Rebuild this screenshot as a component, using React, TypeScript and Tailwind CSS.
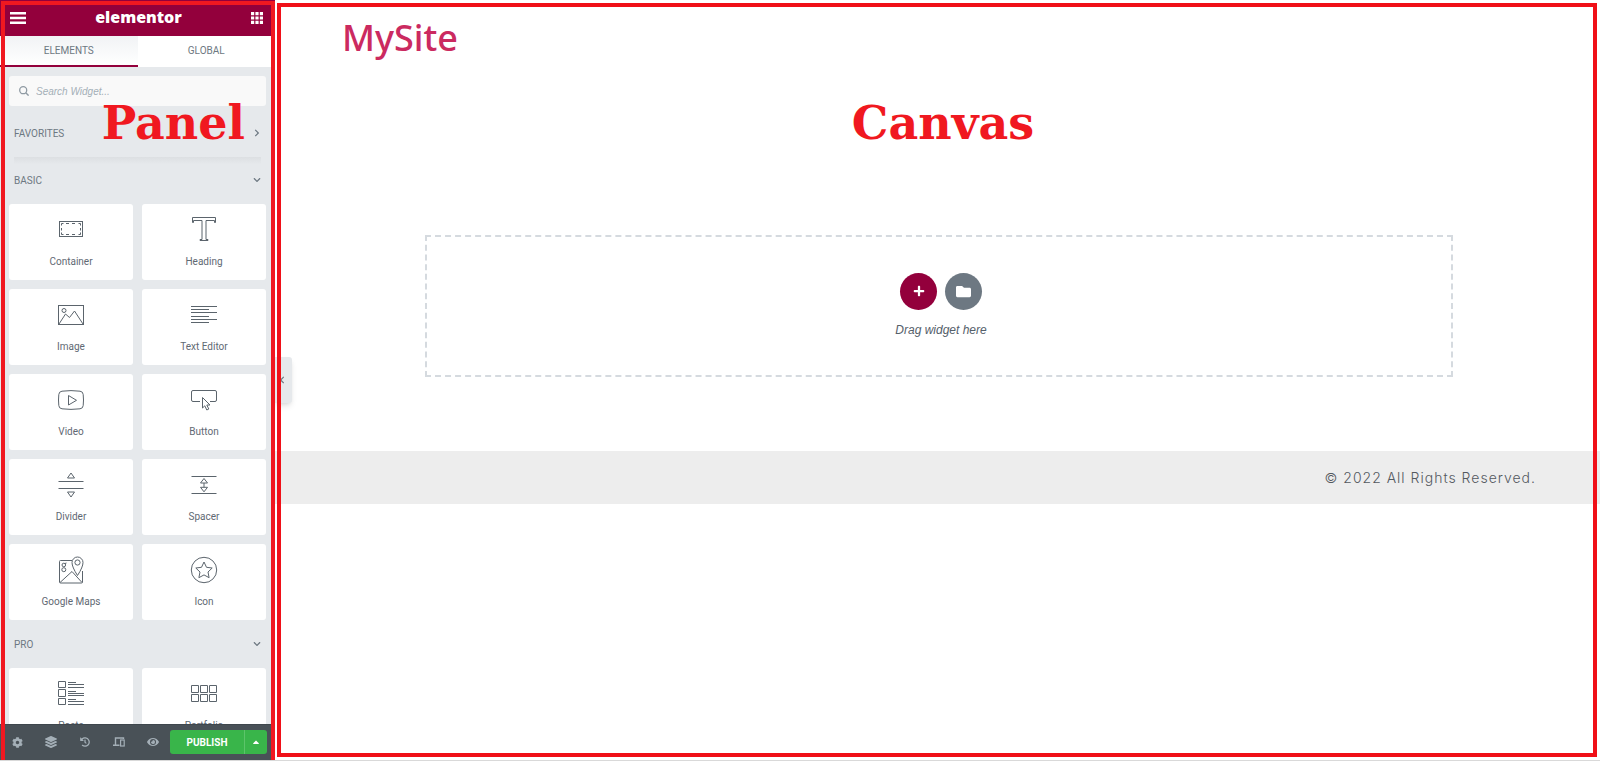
import type { ReactNode } from "react"
import {
  FaCaretUp,
  FaChevronDown,
  FaChevronLeft,
  FaChevronRight,
  FaCog,
  FaEye,
  FaFolder,
  FaHistory,
  FaLayerGroup,
  FaPlus
} from "react-icons/fa"

interface Widget {
  name: string
  icon: ReactNode
}

const BASIC_WIDGETS: Widget[] = [
  {
    name: "Container",
    icon: (
      <>
        <rect x="2.5" y="5.5" width="23" height="15" />
        <path d="M4.500 9.500v-2h2M9 7.500h3M15 7.500h3M21.500 7.500h2v2M23.500 12v2.500M23.500 16.500v2h-2M18 18.500h-3M12 18.500h-3M6.500 18.500h-2v-2M4.500 14.500V12" />
      </>
    )
  },
  {
    name: "Heading",
    icon: (
      <path d="M2.500 1.500h23v5h-1v-2H16v19h2v1h-8v-1h2v-19H3.500v2h-1z" />
    )
  },
  {
    name: "Image",
    icon: (
      <>
        <rect x="1.500" y="4.500" width="25" height="19" />
        <circle cx="7" cy="9.500" r="2" />
        <path d="M2 23l6.500-10 4 3.500 5-6.500L26 23" />
      </>
    )
  },
  {
    name: "Text Editor",
    icon: (
      <path d="M1 5.500h26M1 8.500h18M1 11.500h26M1 15.500h18M1 18.500h26M1 21.500h18" />
    )
  },
  {
    name: "Video",
    icon: (
      <>
        <path d="M5 5.200Q14 4 23 5.200q3 .3 3.200 3.300.6 5.500 0 11-.2 3-3.200 3.300-9 1.200-18 0-3-.3-3.200-3.300-.6-5.500 0-11Q2 5.500 5 5.200z" />
        <path d="M11.500 9.500v9.500l8-4.700z" />
      </>
    )
  },
  {
    name: "Button",
    icon: (
      <>
        <path d="M10 15.500H3q-1.500 0-1.500-1.500V6Q1.500 4.500 3 4.500h22q1.500 0 1.500 1.500v8q0 1.500-1.500 1.500h-5" />
        <path d="M12.500 11.500v10.500l2.300-2.200 2 4.200 2-1-2-4h3.200z" />
      </>
    )
  },
  {
    name: "Divider",
    icon: (
      <path d="M1.500 10.500h25M1.500 17.500h25M14 2l3.500 5h-7zM14 26l3.500-5h-7z" />
    )
  },
  {
    name: "Spacer",
    icon: (
      <path d="M1.500 5.500h25M1.500 22.500h25M14 7.500l3.500 4.500h-7zM14 20.800l3.500-4.500h-7zM14 12v4.300" />
    )
  },
  {
    name: "Google Maps",
    icon: (
      <>
        <path d="M15 4.500H3.500q-1 0-1 1v20.500q0 1 1 1h21q1 0 1-1V15M3 26.500l12-11M15 15.500l10 11" />
        <path d="M20.500 19.500Q15 11 15 6.500a5.500 5.500 0 0 1 11 0q0 4.500-5.500 13z" />
        <circle cx="20.500" cy="6.500" r="2.600" />
        <circle cx="6.800" cy="9" r="1.800" />
        <circle cx="6.800" cy="13.700" r="2" />
        <path d="M8 7.500l1.500-.5" />
      </>
    )
  },
  {
    name: "Icon",
    icon: (
      <>
        <circle cx="14" cy="14" r="12.700" />
        <path d="M14 6l2.500 5.300 5.700.7-4.200 4 1.100 5.700-5.100-2.800-5.100 2.800L10 16l-4.200-4 5.700-.7z" />
      </>
    )
  }
]

const PRO_WIDGETS: Widget[] = [
  {
    name: "Posts",
    icon: (
      <path d="M1.500 1.500h7v6h-7zM1.500 9.500h7v7h-7zM1.500 18.500h7v6h-7zM11 2.500h8M11 4.500h16M11 7.500h16M11 11.500h8M11 13.500h16M11 15.500h16M11 19.500h8M11 21.500h16M11 24.500h16" />
    )
  },
  {
    name: "Portfolio",
    icon: (
      <path d="M1.500 5.500h7v7h-7zM10.500 5.500h7v7h-7zM19.500 5.500h7v7h-7zM1.500 14.500h7v7h-7zM10.500 14.500h7v7h-7zM19.500 14.500h7v7h-7z" />
    )
  }
]

function WidgetGrid({ widgets }: { widgets: Widget[] }) {
  return (
    <div className="grid grid-cols-2 gap-[9px]">
      {widgets.map((widget) => (
        <button
          key={widget.name}
          type="button"
          className="flex h-[76px] flex-col items-center gap-[10px] rounded-[3px] bg-white pt-3">
          <svg
            viewBox="0 0 28 28"
            className="size-7 shrink-0 fill-none stroke-[#5b646c]"
            aria-hidden="true">
            {widget.icon}
          </svg>
          <span className="text-[10px] leading-4 text-[#5f6973]">
            {widget.name}
          </span>
        </button>
      ))}
    </div>
  )
}

function DevicesIcon() {
  return (
    <svg
      viewBox="0 0 12 10"
      className="h-[10px] w-3 fill-none stroke-current"
      aria-hidden="true">
      <path d="M10.500 2V1h-8v6.500M0 8.300h6.500" strokeWidth="1.400" />
      <rect x="7.600" y="3" width="3.600" height="6" strokeWidth="1.200" />
    </svg>
  )
}

const TOOLS = [
  { label: "Settings", icon: <FaCog className="size-[11px]" /> },
  { label: "Navigator", icon: <FaLayerGroup className="size-3" /> },
  { label: "History", icon: <FaHistory className="size-[10px]" /> },
  { label: "Responsive Mode", icon: <DevicesIcon /> },
  { label: "Preview Changes", icon: <FaEye className="size-3" /> }
]

function Panel() {
  return (
    <aside className="relative flex w-[275px] shrink-0 flex-col bg-[#e6e9ec] font-['Roboto',sans-serif]">
      <header className="flex h-9 shrink-0 items-center justify-between bg-[#93003c] pr-3 pl-[10px] text-white">
        <button type="button" aria-label="Menu">
          <svg viewBox="0 0 16 12" className="h-3 w-4 fill-current">
            <path d="M0 0h16v2.500H0zM0 4.750h16v2.500H0zM0 9.500h16V12H0z" />
          </svg>
        </button>
        <span className="pb-[2px] font-['Open_Sans',sans-serif] text-[16px] leading-5 font-extrabold">
          elementor
        </span>
        <button type="button" aria-label="Widgets Panel">
          <svg viewBox="0 0 12 12" className="size-3 fill-current">
            <path d="M0 0h3.200v3.200H0zM4.400 0h3.200v3.200H4.400zM8.800 0H12v3.200H8.800zM0 4.400h3.200v3.200H0zM4.400 4.400h3.200v3.200H4.400zM8.800 4.400H12v3.200H8.800zM0 8.800h3.200V12H0zM4.400 8.800h3.200V12H4.400zM8.800 8.800H12V12H8.800z" />
          </svg>
        </button>
      </header>

      <nav className="grid h-[31px] shrink-0 grid-cols-2 text-[10px] text-[#6d7882]">
        <button
          type="button"
          className="border-b-2 border-[#93003c] bg-linear-to-b from-[#f1f3f5] to-white">
          ELEMENTS
        </button>
        <button type="button" className="border-b-2 border-white bg-white">
          GLOBAL
        </button>
      </nav>

      <div className="min-h-0 flex-1 overflow-hidden px-[9px] pt-[9px]">
        <label className="flex h-[30px] items-center gap-[7px] rounded-[3px] bg-[#f9f9f9] px-[10px] text-[#a4afb7]">
          <svg
            viewBox="0 0 10 10"
            className="size-[10px] fill-none stroke-[#8f9aa3]"
            aria-hidden="true">
            <circle cx="4.200" cy="4.200" r="3.500" strokeWidth="1.300" />
            <path d="M6.800 6.800l2.800 2.800" strokeWidth="1.400" />
          </svg>
          <input
            type="text"
            aria-label="Search Widget"
            placeholder="Search Widget..."
            className="min-w-0 flex-1 bg-transparent font-['Liberation_Sans',sans-serif] text-[10px] italic outline-none placeholder:text-[#a4afb7]"
          />
        </label>

        <button
          type="button"
          className="mt-[3px] flex h-12 w-full items-center justify-between px-[5px] text-[10px] text-[#6d7882]">
          FAVORITES
          <FaChevronRight className="size-2" />
        </button>
        <div className="mx-[5px] h-[7px] bg-linear-to-b from-[#dcdfe2] to-[#e6e9ec]" />
        <button
          type="button"
          className="mb-2 flex h-8 w-full items-center justify-between px-[5px] text-[10px] text-[#6d7882]">
          BASIC
          <FaChevronDown className="size-2" />
        </button>
        <WidgetGrid widgets={BASIC_WIDGETS} />
        <button
          type="button"
          className="flex h-12 w-full items-center justify-between px-[5px] text-[10px] text-[#6d7882]">
          PRO
          <FaChevronDown className="size-2" />
        </button>
        <WidgetGrid widgets={PRO_WIDGETS} />
      </div>

      <footer className="flex h-9 shrink-0 items-center border-t border-[#3f474d] bg-[#495157] pb-px text-[#a4afb7]">
        {TOOLS.map((tool) => (
          <button
            key={tool.label}
            type="button"
            aria-label={tool.label}
            className="flex h-full w-[34px] items-center justify-center">
            {tool.icon}
          </button>
        ))}
        <div className="flex h-6 w-[97px] overflow-hidden rounded-[3px] bg-[#39b54a] text-white">
          <button
            type="button"
            className="flex-1 border-r border-[#5cc46a] text-[10px] font-bold">
            PUBLISH
          </button>
          <button
            type="button"
            aria-label="Save Options"
            className="flex w-[22px] items-center justify-center">
            <FaCaretUp className="size-[10px]" />
          </button>
        </div>
      </footer>

      {/* collapse handle */}
      <button
        type="button"
        aria-label="Collapse panel"
        className="absolute top-[357px] left-full z-10 flex h-[46px] w-[17px] items-center justify-end rounded-r-[3px] bg-[#e6e9ec] pr-[7px] text-[#6d7882] shadow-md">
        <FaChevronLeft className="h-2 w-[6px]" />
      </button>
    </aside>
  )
}

function Canvas() {
  return (
    <main className="flex min-w-0 flex-1 flex-col bg-white">
      <h1 className="pt-[13px] pl-[67px] font-['Noto_Sans',sans-serif] text-[36px] leading-[50px] font-medium text-[#cb2a60]">
        MySite
      </h1>
      <div className="mt-[172px] mr-[147px] ml-[150px] flex h-[142px] flex-col items-center justify-center border-2 border-dashed border-[#d5dadf] pl-1 font-['Roboto',sans-serif]">
        <div className="flex gap-2">
          <button
            type="button"
            aria-label="Add New Section"
            className="flex size-[37px] items-center justify-center rounded-full bg-[#93003c] text-white">
            <FaPlus className="size-3" />
          </button>
          <button
            type="button"
            aria-label="Add Template"
            className="flex size-[37px] items-center justify-center rounded-full bg-[#6d7882] text-white">
            <FaFolder className="size-[15px]" />
          </button>
        </div>
        <p className="mt-[10px] font-['Liberation_Sans',sans-serif] text-[12px] leading-5 text-[#55606a] italic">
          Drag widget here
        </p>
      </div>
      <footer className="mt-[74px] flex h-[53px] items-center justify-end bg-[#ededed] pr-16 pb-px font-['Inter',sans-serif] text-[14px] font-light tracking-[1px] text-[#54595f]">
        © 2022 All Rights Reserved.
      </footer>
    </main>
  )
}

export default function App() {
  return (
    <div className="relative flex h-screen overflow-hidden border-b border-[#d9d9d9]">
      <Panel />
      <Canvas />

      {/* callouts over the editor */}
      <div className="pointer-events-none absolute inset-0 z-20 flex gap-[2px] pl-px font-['DejaVu_Serif',serif] text-[46px] leading-[60px] font-bold text-[#f01820]">
        <div className="mt-px flex w-[274px] shrink-0 justify-end border-4 border-b-0 border-[#f01820] pt-[88px] pr-[26px]">
          Panel
        </div>
        <div className="mt-[3px] mr-[3px] mb-[3px] flex-1 border-4 border-[#f01018] pt-[86px] pl-3 text-center">
          Canvas
        </div>
      </div>
    </div>
  )
}
